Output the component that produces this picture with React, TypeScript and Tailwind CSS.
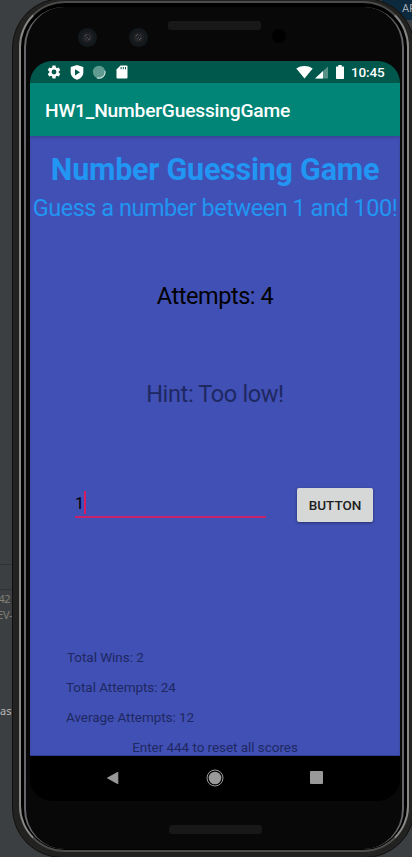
import type { ReactNode } from "react";

function StatusBar() {
  return (
    <div className="flex h-[22px] shrink-0 items-center bg-[#00574b] pl-[16px] pr-[16px] text-white">
      <svg className="size-4" viewBox="0 0 24 24" fill="currentColor">
        <path d="M19.14 12.94c.04-.3.06-.61.06-.94 0-.32-.02-.64-.07-.94l2.03-1.58a.49.49 0 0 0 .12-.61l-1.92-3.32a.49.49 0 0 0-.59-.22l-2.39.96c-.5-.38-1.03-.7-1.62-.94l-.36-2.54a.48.48 0 0 0-.48-.41h-3.84a.48.48 0 0 0-.47.41l-.36 2.54c-.59.24-1.13.57-1.62.94l-2.39-.96a.49.49 0 0 0-.59.22L2.74 8.87c-.12.21-.08.47.12.61l2.03 1.58c-.05.3-.09.63-.09.94s.02.64.07.94l-2.03 1.58a.49.49 0 0 0-.12.61l1.92 3.32c.12.22.37.29.59.22l2.39-.96c.5.38 1.03.7 1.62.94l.36 2.54c.05.24.24.41.48.41h3.84c.24 0 .44-.17.47-.41l.36-2.54c.59-.24 1.13-.56 1.62-.94l2.39.96c.22.08.47 0 .59-.22l1.92-3.32a.49.49 0 0 0-.12-.61zM12 15.6a3.6 3.6 0 1 1 0-7.2 3.6 3.6 0 0 1 0 7.2z" />
      </svg>
      <svg className="ml-[7px] h-[15px] w-4" viewBox="0 0 16 15">
        <path d="M8 0 14.300 2v5.500c0 3.400-2.900 6.200-6.300 7.300-3.400-1.100-6.300-3.900-6.300-7.300V2z" fill="white" />
        <path d="M6 4.200v6.200l5-3.100z" fill="#00574b" />
      </svg>
      <svg className="ml-[7px] mr-[1px] size-[14px]" viewBox="0 0 14 14">
        <circle cx="7" cy="7" r="6.200" fill="#5f9b91" />
        <path d="M13 6A6.100 6.100 0 0 1 4.800 12.700" fill="none" stroke="#cfe3df" strokeWidth="1.100" />
      </svg>
      <svg className="ml-[9px] h-[14px] w-3" viewBox="0 0 12 14">
        <path d="M4.500.5H10.500a1 1 0 0 1 1 1v11a1 1 0 0 1-1 1h-9a1 1 0 0 1-1-1v-8z" fill="white" />
        <path d="M4.600 2h1v2.300h-1zM6.800 2h1v2.300h-1zM9 2h1v2.300H9z" fill="#00574b" />
      </svg>
      <svg className="ml-auto h-[14px] w-[17px]" viewBox="0 0 17 14">
        <path d="M.3 3.400C5 .1 12 .1 16.700 3.400L8.500 13.400z" fill="white" />
      </svg>
      <svg className="ml-[2px] h-[13px] w-[13px]" viewBox="0 0 13 13">
        <path d="M0 12.500 13 .5v12z" fill="#579187" />
        <path d="M0 12.500 8 5.100v7.400z" fill="white" />
      </svg>
      <svg className="ml-[8px] h-[14px] w-2" viewBox="0 0 8 14">
        <path d="M2.300 0h3.400v1.400H7.300q.7 0 .7.700v11.200q0 .7-.7.700H.7q-.7 0-.7-.7V2.100q0-.7.700-.7h1.600z" fill="white" />
      </svg>
      <span className="ml-[7px] w-[33px] whitespace-nowrap text-[13.500px] font-medium leading-[22px] tracking-[-.15px]">10:45</span>
    </div>
  );
}

function Camera() {
  return (
    <div className="flex size-[19px] items-center justify-center rounded-full bg-[#13191d]">
      <svg className="size-[13px]" viewBox="0 0 13 13">
        <circle cx="6.500" cy="6.500" r="6" fill="#1c1e21" />
        <circle cx="6.500" cy="6.500" r="3.800" fill="#2a2b2f" />
        <circle cx="6.500" cy="6.500" r="2" fill="#1b1c20" />
        <path d="m3.800 5 1.700-1.500M7 9l2-2M5.500 7.500l1.200-1.500" stroke="#565a62" strokeWidth="1" />
      </svg>
    </div>
  );
}

function Grille() {
  return (
    <div className="h-[9px] w-[93px] rounded-[3px] bg-[#181818] bg-[radial-gradient(#2b2b2b_40%,transparent_45%)] bg-[length:2px_2px]" />
  );
}

function NavigationBar() {
  return (
    <div className="flex h-[45px] shrink-0 items-center justify-between bg-black pb-[2px] pl-[76px] pr-[77px]">
      <svg className="size-[14px]" viewBox="0 0 14 14">
        <path d="M1.500 7 11.800 1.300v11.400z" fill="#999" stroke="#999" strokeWidth="1" strokeLinejoin="round" />
      </svg>
      <svg className="size-[18px]" viewBox="0 0 18 18">
        <circle cx="9" cy="9" r="8" fill="none" stroke="#999" strokeWidth="1" />
        <circle cx="9" cy="9" r="6.300" fill="#999" />
      </svg>
      <div className="size-[13px] rounded-[1px] bg-[#999]" />
    </div>
  );
}

function Stat({ children }: { children: ReactNode }) {
  return <p className="h-[30px] text-[13.500px] leading-[30px] tracking-[-.05px]">{children}</p>;
}

function GameScreen() {
  return (
    <main className="flex h-[620px] shrink-0 flex-col border-b border-[#303c91] bg-[#4150b4] text-[#1e2862] shadow-[inset_0_2px_2px_#3a469a]">
      <h1 className="mt-[14px] h-10 whitespace-nowrap text-center text-[30.500px] font-bold leading-10 tracking-[-.25px] text-[#2196f3]">Number Guessing Game</h1>
      <p className="mt-[2px] h-8 whitespace-nowrap text-center text-[23.500px] leading-8 tracking-[-.48px] text-[#2196f3]">Guess a number between 1 and 100!</p>
      <p className="mt-[56px] h-8 text-center text-[23.500px] leading-8 tracking-[-.45px] text-black">Attempts: 4</p>
      <p className="mt-[66px] h-8 text-center text-[23.500px] leading-8 tracking-[-.35px]">Hint: Too low!</p>
      <div className="mt-[78px] flex h-[34px] pl-[45px] pr-[27px]">
        <div className="flex h-[30px] w-[191px] items-center border-b-2 border-[#c6236b] text-black">
          <span className="pt-[3px] text-[16.200px] leading-[30px]">1</span>
          <span className="h-[23px] w-[2px] bg-[#d81b60]" />
        </div>
        <button className="ml-auto h-[34px] w-[76px] rounded-[2px] bg-[#d6d7d7] text-[13.500px] font-medium text-[#202020] shadow-[0_1px_3px_#0006]">BUTTON</button>
      </div>
      <div className="mt-[120px] flex flex-col pl-[36px]">
        <div className="pl-px"><Stat>Total Wins: 2</Stat></div>
        <Stat>Total Attempts: 24</Stat>
        <Stat>Average Attempts: 12</Stat>
      </div>
      <p className="h-[30px] text-center text-[13.500px] leading-[30px] tracking-[-.05px]">Enter 444 to reset all scores</p>
    </main>
  );
}

function Phone() {
  return (
    <div className="absolute left-[12px] top-[-2px] h-[860px] w-[403px] overflow-hidden rounded-[50px] border border-[#111] bg-[#222221]">
      <div className="ml-[6px] mr-[5px] mt-[2px] h-[851px] rounded-[46px] border-x-2 border-y-2 border-x-[#888886] border-y-[#4c4c4b] bg-black px-[3px] pt-[4px]">
        <div className="h-[842px] rounded-[40px] border-x-2 border-[#66666a] bg-[#080808] pl-[4px] pr-[2px]">
          <div className="flex h-[54px] items-start">
            <div className="flex w-full pl-[48px] pt-[21px]">
              <Camera />
              <div className="ml-[32px]"><Camera /></div>
              <div className="ml-[20px] mt-[-7px]"><Grille /></div>
              <div className="ml-[11px] mt-[1px] size-[14px] rounded-full bg-black" />
            </div>
          </div>
          <div className="flex h-[740px] flex-col overflow-hidden rounded-[22px]">
            <StatusBar />
            <header className="flex h-[53px] shrink-0 items-center bg-[#008577] pl-[15px] pt-[3px] text-[19.200px] font-medium tracking-[-.2px] text-white">HW1_NumberGuessingGame</header>
            <GameScreen />
            <NavigationBar />
          </div>
          <div className="flex justify-center pt-[24px]"><Grille /></div>
        </div>
      </div>
    </div>
  );
}

export default function App() {
  return (
    <div className="relative h-[857px] w-[412px] overflow-hidden bg-[#3c3f41] font-['Roboto',sans-serif]">
      <div className="flex h-[565px] flex-col border-b border-[#303234]">
        <div className="ml-auto h-5 w-[30px] bg-[#0d293e] pl-[20px] pt-[1px] text-[11px] leading-4 text-[#a5adb3]">AP</div>
      </div>
      <div className="h-[25px] border-b border-[#303234]" />
      <div className="flex w-3 flex-col items-end whitespace-nowrap pt-px font-['Open_Sans',sans-serif] text-[11px] leading-4 text-[#85827c]">
        <span className="pr-[2px] tracking-[-.5px]">42</span>
        <span className="tracking-[-.5px]">EV-</span>
      </div>
      <div className="mt-[80px] w-[12px] whitespace-nowrap font-['Noto_Sans',sans-serif] text-[11px] leading-4 text-[#b7b7b7]">as:</div>
      <Phone />
    </div>
  );
}
